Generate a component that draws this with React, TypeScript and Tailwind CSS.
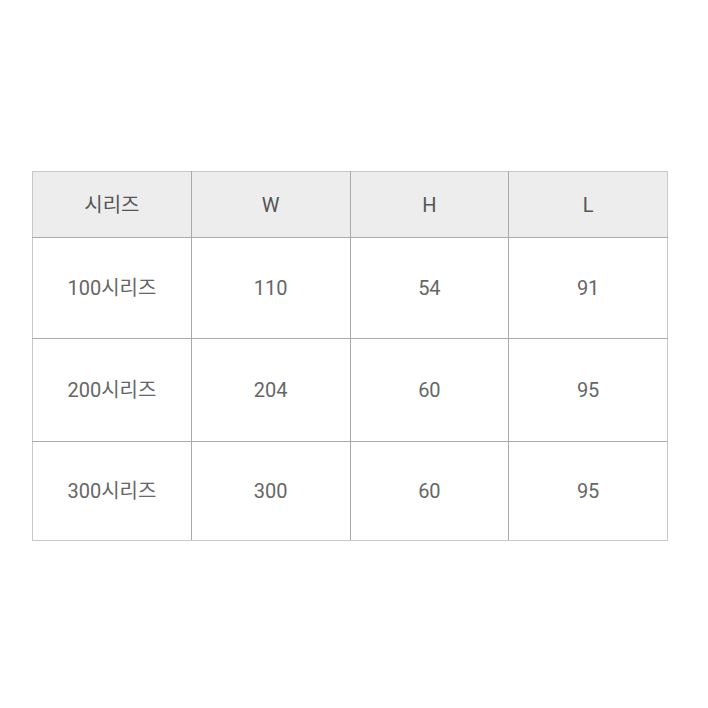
import React from 'react';

const rows = [
  { name: '100시리즈', w: '110', h: '54', l: '91', height: 'h-[101px]' },
  { name: '200시리즈', w: '204', h: '60', l: '95', height: 'h-[103px]' },
  { name: '300시리즈', w: '300', h: '60', l: '95', height: 'h-[99px]' },
];

const App: React.FC = () => {
  return (
    <div
      className="w-[708px] h-[708px] bg-white pt-[171px] pl-[32px]"
      style={{ fontFamily: 'Roboto, "Noto Sans CJK KR", sans-serif' }}
    >
      <table className="w-[636px] border-collapse table-fixed text-[20px] text-[#666666]">
        <thead>
          <tr className="h-[66px] bg-[#ededed]">
            {['시리즈', 'W', 'H', 'L'].map((t) => (
              <th
                key={t}
                className="border border-[#aaaaaa] border-t-[#c8c8c8] first:border-l-[#c8c8c8] last:border-r-[#c8c8c8] font-normal text-center text-[#555555]"
              >
                {t}
              </th>
            ))}
          </tr>
        </thead>
        <tbody>
          {rows.map((r, i) => {
            const bottom = i === rows.length - 1 ? 'border-b-[#c8c8c8]' : '';
            return (
              <tr key={r.name} className={r.height}>
                <td className={`border border-[#aaaaaa] border-l-[#c8c8c8] text-center ${bottom}`}>{r.name}</td>
                <td className={`border border-[#aaaaaa] text-center ${bottom}`}>{r.w}</td>
                <td className={`border border-[#aaaaaa] text-center ${bottom}`}>{r.h}</td>
                <td className={`border border-[#aaaaaa] border-r-[#c8c8c8] text-center ${bottom}`}>{r.l}</td>
              </tr>
            );
          })}
        </tbody>
      </table>
    </div>
  );
};

export default App;
